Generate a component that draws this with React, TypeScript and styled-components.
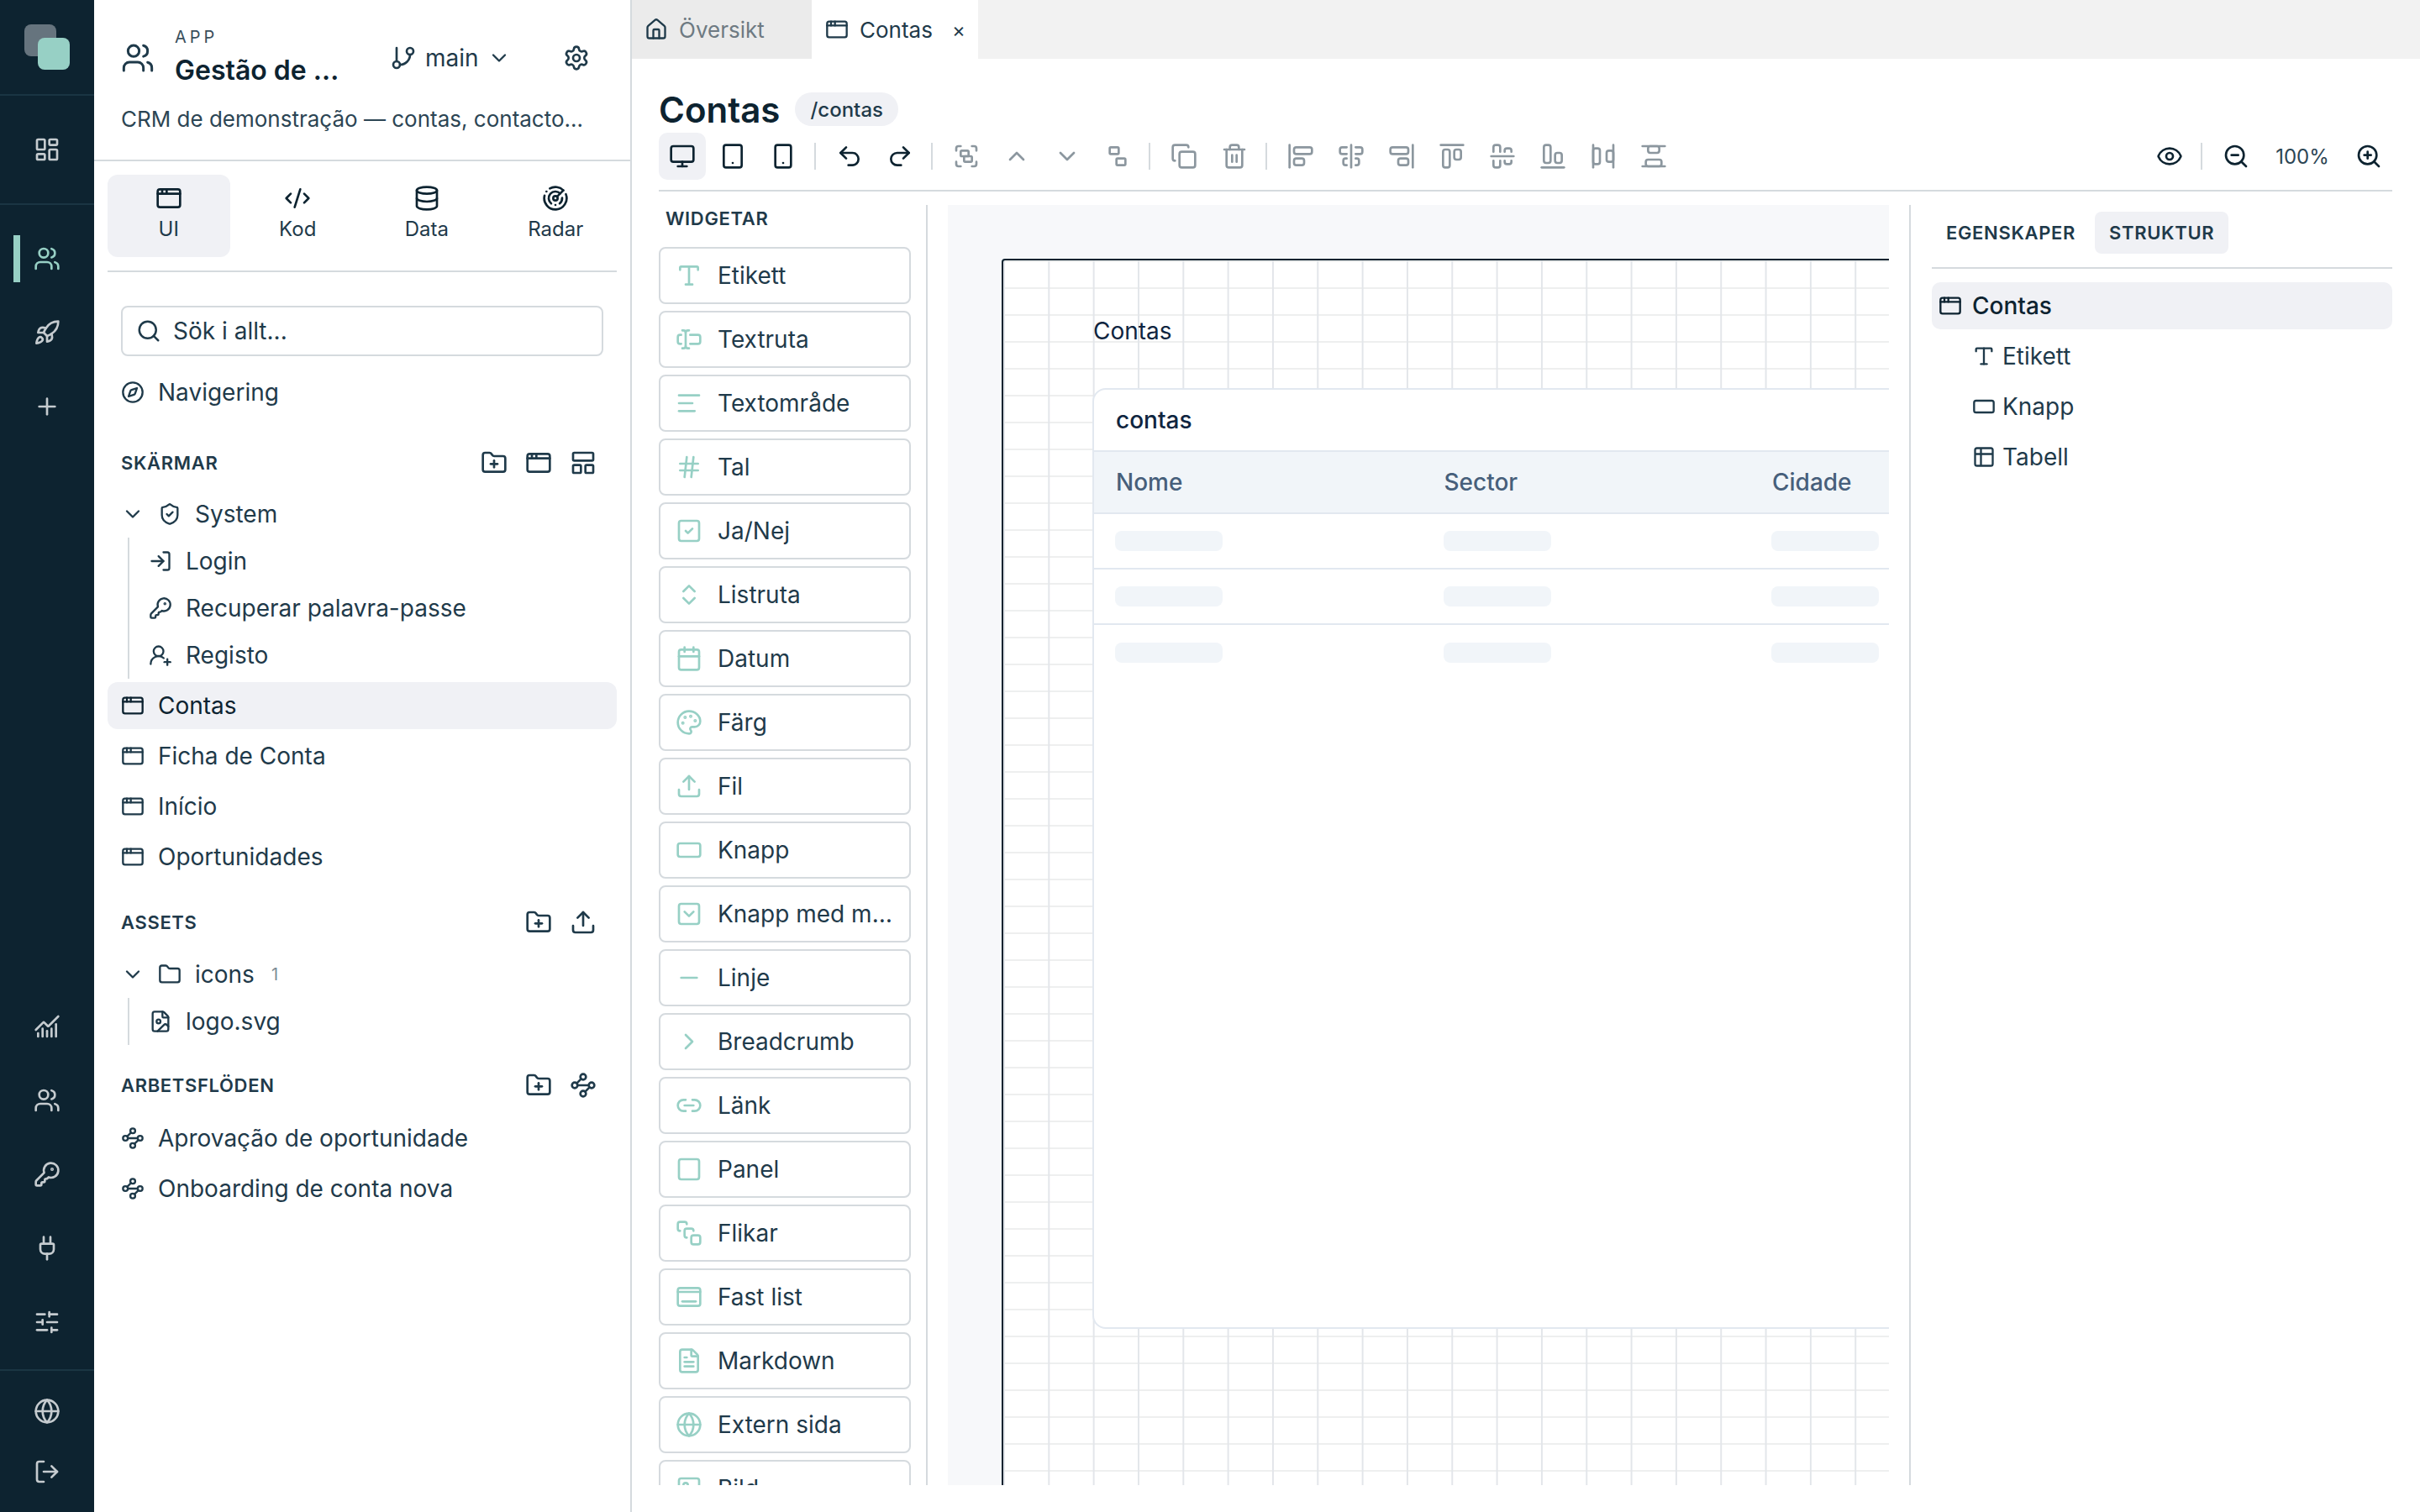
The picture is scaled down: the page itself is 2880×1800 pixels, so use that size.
import React from 'react'
import styled, { createGlobalStyle } from 'styled-components'
import {
  AlignCenterHorizontal, AlignCenterVertical, AlignEndHorizontal, AlignEndVertical,
  AlignHorizontalSpaceBetween, AlignLeft, AlignStartHorizontal, AlignStartVertical,
  AlignVerticalSpaceBetween, AppWindow, Calendar, ChartNoAxesCombined, ChevronDown,
  ChevronRight, ChevronUp, ChevronsUpDown, CodeXml, Compass, Copy, Database, Eye,
  FileImage, FileText, Folder, FolderPlus, GitBranch, Globe, Group, Hash, House, Image,
  KeyRound, LayoutDashboard, LayoutPanelTop, Link2, LogIn, LogOut, Minus, Monitor, Palette, Plug,
  Plus, Radar, Redo2, RectangleHorizontal, Rocket, Search, Settings, ShieldCheck,
  SlidersHorizontal, Smartphone, Square, SquareCheck, SquareChevronDown, SquareStack,
  Table2, Tablet, TextCursorInput, Trash2, Type, Undo2, Ungroup, Upload, UserRoundPlus,
  Users, Waypoints, ZoomIn, ZoomOut,
} from 'lucide-react'

const GlobalStyle = createGlobalStyle`
  html, body {
    margin: 0;
    height: 100%;
    background: #fff;
  }
  body {
    font-family: Inter, "Noto Sans", sans-serif;
    color: #1f3a4a;
  }
  * {
    box-sizing: border-box;
  }
`

// no lucide icon for this one
const FixedListIcon = ({ size = 32 }: { size?: number }) => (
  <svg width={size} height={size} viewBox="0 0 24 24" fill="none" stroke="currentColor" strokeWidth="2" strokeLinecap="round" strokeLinejoin="round">
    <rect x="2" y="4" width="20" height="16" rx="2" />
    <path d="M2 7.5h20" />
    <path d="M6 16h12" />
  </svg>
)

const widgets = [
  { label: 'Etikett', Icon: Type },
  { label: 'Textruta', Icon: TextCursorInput },
  { label: 'Textområde', Icon: AlignLeft },
  { label: 'Tal', Icon: Hash },
  { label: 'Ja/Nej', Icon: SquareCheck },
  { label: 'Listruta', Icon: ChevronsUpDown },
  { label: 'Datum', Icon: Calendar },
  { label: 'Färg', Icon: Palette },
  { label: 'Fil', Icon: Upload },
  { label: 'Knapp', Icon: RectangleHorizontal },
  { label: 'Knapp med meny', Icon: SquareChevronDown },
  { label: 'Linje', Icon: Minus },
  { label: 'Breadcrumb', Icon: ChevronRight },
  { label: 'Länk', Icon: Link2 },
  { label: 'Panel', Icon: Square },
  { label: 'Flikar', Icon: SquareStack },
  { label: 'Fast list', Icon: FixedListIcon },
  { label: 'Markdown', Icon: FileText },
  { label: 'Extern sida', Icon: Globe },
  { label: 'Bild', Icon: Image },
]

const App = () => {
  return (
    <Page>
      <GlobalStyle />
      <Rail>
        <LogoBlock>
          <Logo>
            <LogoBack />
            <LogoFront />
          </Logo>
        </LogoBlock>
        <RailGroup>
          <RailButton><LayoutDashboard size={32} /></RailButton>
        </RailGroup>
        <RailGroup grow>
          <RailButton active><Users size={32} /></RailButton>
          <RailButton><Rocket size={32} /></RailButton>
          <RailButton><Plus size={32} /></RailButton>
        </RailGroup>
        <RailGroup pad={28}>
          <RailButton><ChartNoAxesCombined size={32} /></RailButton>
          <RailButton><Users size={32} /></RailButton>
          <RailButton><KeyRound size={32} /></RailButton>
          <RailButton><Plug size={32} /></RailButton>
          <RailButton><SlidersHorizontal size={32} /></RailButton>
        </RailGroup>
        <RailGroup pad={20} gap={16} last>
          <RailButton><Globe size={32} /></RailButton>
          <RailButton><LogOut size={32} /></RailButton>
        </RailGroup>
      </Rail>

      <Sidebar>
        <AppHeader>
          <AppTop>
            <Users size={40} strokeWidth={1.8} />
            <AppName>
              <AppKicker>APP</AppKicker>
              <AppTitle>Gestão de Contas</AppTitle>
            </AppName>
            <BranchButton>
              <GitBranch size={32} />
              main
              <ChevronDown size={28} />
            </BranchButton>
            <SettingsButton><Settings size={32} /></SettingsButton>
          </AppTop>
          <AppDesc>CRM de demonstração — contas, contactos e oportunidades</AppDesc>
        </AppHeader>

        <ModeTabs>
          <ModeTab active><AppWindow size={32} /><span>UI</span></ModeTab>
          <ModeTab><CodeXml size={32} /><span>Kod</span></ModeTab>
          <ModeTab><Database size={32} /><span>Data</span></ModeTab>
          <ModeTab><Radar size={32} /><span>Radar</span></ModeTab>
        </ModeTabs>

        <SearchBox>
          <Search size={30} />
          <span>Sök i allt...</span>
        </SearchBox>

        <TreeList>
          <TreeRow><Compass size={28} />Navigering</TreeRow>
        </TreeList>

        <SectionHead top={36}>
          <SectionTitle>SKÄRMAR</SectionTitle>
          <SectionActions>
            <FolderPlus size={32} />
            <AppWindow size={32} />
            <LayoutPanelTop size={32} />
          </SectionActions>
        </SectionHead>

        <TreeList top={13}>
          <TreeRow><ChevronDown size={28} /><ShieldCheck size={28} />System</TreeRow>
          <TreeChildren>
            <TreeRow plain><LogIn size={28} />Login</TreeRow>
            <TreeRow plain><KeyRound size={28} />Recuperar palavra-passe</TreeRow>
            <TreeRow plain><UserRoundPlus size={28} />Registo</TreeRow>
          </TreeChildren>
          <TreeStack>
            <TreeRow active><AppWindow size={28} />Contas</TreeRow>
            <TreeRow><AppWindow size={28} />Ficha de Conta</TreeRow>
            <TreeRow><AppWindow size={28} />Início</TreeRow>
            <TreeRow><AppWindow size={28} />Oportunidades</TreeRow>
          </TreeStack>
        </TreeList>

        <SectionHead top={30}>
          <SectionTitle>ASSETS</SectionTitle>
          <SectionActions>
            <FolderPlus size={32} />
            <Upload size={32} />
          </SectionActions>
        </SectionHead>

        <TreeList top={14}>
          <TreeRow><ChevronDown size={28} /><Folder size={28} />icons<Count>1</Count></TreeRow>
          <TreeChildren>
            <TreeRow plain><FileImage size={28} />logo.svg</TreeRow>
          </TreeChildren>
        </TreeList>

        <SectionHead top={28}>
          <SectionTitle>ARBETSFLÖDEN</SectionTitle>
          <SectionActions>
            <FolderPlus size={32} />
            <Waypoints size={32} />
          </SectionActions>
        </SectionHead>

        <TreeList top={15}>
          <TreeStack>
            <TreeRow><Waypoints size={28} />Aprovação de oportunidade</TreeRow>
            <TreeRow><Waypoints size={28} />Onboarding de conta nova</TreeRow>
          </TreeStack>
        </TreeList>
      </Sidebar>

      <Main>
        <TabBar>
          <DocTab><House size={28} />Översikt</DocTab>
          <DocTab active><AppWindow size={28} />Contas<TabClose>×</TabClose></DocTab>
        </TabBar>

        <Workspace>
          <TitleRow>
            <ScreenTitle>Contas</ScreenTitle>
            <RoutePill>/contas</RoutePill>
          </TitleRow>

          <Toolbar>
            <ToolButton active><Monitor size={32} /></ToolButton>
            <ToolButton><Tablet size={32} /></ToolButton>
            <ToolButton><Smartphone size={32} /></ToolButton>
            <ToolDivider />
            <ToolButton><Undo2 size={32} /></ToolButton>
            <ToolButton><Redo2 size={32} /></ToolButton>
            <ToolDivider />
            <ToolButton off><Group size={32} /></ToolButton>
            <ToolButton off><ChevronUp size={32} /></ToolButton>
            <ToolButton off><ChevronDown size={32} /></ToolButton>
            <ToolButton off><Ungroup size={32} /></ToolButton>
            <ToolDivider />
            <ToolButton off><Copy size={32} /></ToolButton>
            <ToolButton off><Trash2 size={32} /></ToolButton>
            <ToolDivider />
            <ToolButton off><AlignStartVertical size={32} /></ToolButton>
            <ToolButton off><AlignCenterVertical size={32} /></ToolButton>
            <ToolButton off><AlignEndVertical size={32} /></ToolButton>
            <ToolButton off><AlignStartHorizontal size={32} /></ToolButton>
            <ToolButton off><AlignCenterHorizontal size={32} /></ToolButton>
            <ToolButton off><AlignEndHorizontal size={32} /></ToolButton>
            <ToolButton off><AlignHorizontalSpaceBetween size={32} /></ToolButton>
            <ToolButton off><AlignVerticalSpaceBetween size={32} /></ToolButton>
            <ToolSpacer />
            <ToolButton><Eye size={32} /></ToolButton>
            <ToolDivider />
            <ToolButton><ZoomOut size={32} /></ToolButton>
            <ZoomValue>100%</ZoomValue>
            <ToolButton><ZoomIn size={32} /></ToolButton>
          </Toolbar>

          <Body>
            <WidgetPanel>
              <WidgetHeading>WIDGETAR</WidgetHeading>
              <WidgetList>
                {widgets.map(({ label, Icon }) => (
                  <WidgetItem key={label}>
                    <WidgetIcon><Icon size={32} /></WidgetIcon>
                    <WidgetLabel>{label}</WidgetLabel>
                  </WidgetItem>
                ))}
              </WidgetList>
            </WidgetPanel>

            <Canvas>
              <Frame>
                <CanvasLabel>Contas</CanvasLabel>
                <TableCard>
                  <TableTitle>contas</TableTitle>
                  <TableHeader>
                    <HeaderCell>Nome</HeaderCell>
                    <HeaderCell>Sector</HeaderCell>
                    <HeaderCell>Cidade</HeaderCell>
                  </TableHeader>
                  {[0, 1, 2].map((row) => (
                    <TableRow key={row} last={row === 2}>
                      <SkeletonCell><Skeleton /></SkeletonCell>
                      <SkeletonCell><Skeleton /></SkeletonCell>
                      <SkeletonCell><Skeleton /></SkeletonCell>
                    </TableRow>
                  ))}
                </TableCard>
              </Frame>
            </Canvas>

            <Inspector>
              <InspectorTabs>
                <InspectorTab>EGENSKAPER</InspectorTab>
                <InspectorTab active>STRUKTUR</InspectorTab>
              </InspectorTabs>
              <StructureList>
                <StructureRoot><AppWindow size={28} />Contas</StructureRoot>
                <StructureRow><Type size={28} />Etikett</StructureRow>
                <StructureRow><RectangleHorizontal size={28} />Knapp</StructureRow>
                <StructureRow><Table2 size={28} />Tabell</StructureRow>
              </StructureList>
            </Inspector>
          </Body>
        </Workspace>
      </Main>
    </Page>
  )
}

export default App

const Page = styled.div`
  display: flex;
  width: 100%;
  height: 100vh;
  overflow: hidden;
  background: #fff;
`

/* left rail */
const Rail = styled.nav`
  width: 112px;
  flex-shrink: 0;
  display: flex;
  flex-direction: column;
  background: #0d2330;
`
const LogoBlock = styled.div`
  height: 114px;
  display: flex;
  padding: 29px 0 0 29px;
  border-bottom: 2px solid #1a3543;
`
const Logo = styled.div`
  position: relative;
  width: 54px;
  height: 54px;
`
const LogoBack = styled.div`
  width: 38px;
  height: 38px;
  border-radius: 8px;
  background: #66747e;
`
const LogoFront = styled.div`
  position: absolute;
  left: 16px;
  top: 16px;
  width: 38px;
  height: 38px;
  border-radius: 8px;
  background: #97d0c5;
`
const RailGroup = styled.div<{ grow?: boolean; pad?: number; gap?: number; last?: boolean }>`
  display: flex;
  flex-direction: column;
  flex-grow: ${({ grow }) => (grow ? 1 : 0)};
  gap: ${({ gap }) => gap ?? 32}px;
  padding: ${({ pad }) => pad ?? 36}px 0;
  border-bottom: ${({ grow, last }) => (grow || last ? 'none' : '2px solid #1a3543')};
`
const RailButton = styled.div<{ active?: boolean }>`
  position: relative;
  height: 56px;
  display: flex;
  align-items: center;
  justify-content: center;
  color: ${({ active }) => (active ? '#97d0c5' : '#c5cbcf')};
  &::before {
    content: '';
    display: ${({ active }) => (active ? 'block' : 'none')};
    position: absolute;
    left: 16px;
    top: 0;
    bottom: 0;
    width: 8px;
    background: #97d0c5;
  }
`

/* app sidebar */
const Sidebar = styled.aside`
  width: 640px;
  flex-shrink: 0;
  display: flex;
  flex-direction: column;
  background: #fff;
  border-right: 2px solid #d5dade;
`
const AppHeader = styled.div`
  height: 192px;
  padding: 32px 48px 0 32px;
  border-bottom: 2px solid #d5dade;
  color: #1f3a4a;
`
const AppTop = styled.div`
  display: flex;
  align-items: center;
  color: #1f3a4a;
`
const AppName = styled.div`
  width: 200px;
  margin-left: 24px;
  display: flex;
  flex-direction: column;
  gap: 6px;
`
const AppKicker = styled.div`
  font-size: 20px;
  line-height: 24px;
  letter-spacing: 0.2em;
  color: #3a4f5c;
`
const AppTitle = styled.div`
  font-size: 32px;
  line-height: 44px;
  font-weight: 600;
  color: #0d2330;
  white-space: nowrap;
  overflow: hidden;
  text-overflow: ellipsis;
`
const BranchButton = styled.div`
  margin-left: 56px;
  display: flex;
  align-items: center;
  gap: 10px;
  font-size: 28px;
  color: #1f3a4a;
`
const SettingsButton = styled.div`
  margin-left: auto;
  display: flex;
`
const AppDesc = styled.div`
  margin-top: 18px;
  font-size: 26px;
  line-height: 36px;
  color: #2c4554;
  white-space: nowrap;
  overflow: hidden;
  text-overflow: ellipsis;
`
const ModeTabs = styled.div`
  margin: 16px 16px 0;
  padding-bottom: 16px;
  display: grid;
  grid-template-columns: repeat(4, 1fr);
  gap: 8px;
  border-bottom: 2px solid #d5dade;
`
const ModeTab = styled.div<{ active?: boolean }>`
  height: 98px;
  padding-top: 12px;
  display: flex;
  flex-direction: column;
  align-items: center;
  gap: 5px;
  border-radius: 12px;
  background: ${({ active }) => (active ? '#f0f1f5' : 'transparent')};
  color: #0d2330;
  span {
    font-size: 24px;
    line-height: 32px;
    color: #1f3a4a;
  }
`
const SearchBox = styled.div`
  margin: 40px 32px 0;
  height: 60px;
  display: flex;
  align-items: center;
  gap: 14px;
  padding: 0 16px;
  border: 2px solid #d5dade;
  border-radius: 8px;
  font-size: 28px;
  color: #1f3a4a;
`
const TreeList = styled.div<{ top?: number }>`
  margin: ${({ top }) => top ?? 15}px 16px 0;
`
const TreeStack = styled.div`
  display: flex;
  flex-direction: column;
  gap: 4px;
  padding-top: 4px;
  &:first-child {
    padding-top: 0;
  }
`
const TreeRow = styled.div<{ active?: boolean; plain?: boolean }>`
  height: 56px;
  display: flex;
  align-items: center;
  gap: 16px;
  padding-left: ${({ plain }) => (plain ? 0 : 16)}px;
  border-radius: 12px;
  background: ${({ active }) => (active ? '#f0f1f5' : 'transparent')};
  font-size: 28px;
  color: ${({ active }) => (active ? '#0d2330' : '#1f3a4a')};
  white-space: nowrap;
`
const TreeChildren = styled.div`
  margin-left: 24px;
  padding-left: 23px;
  border-left: 2px solid #d5dade;
`
const Count = styled.span`
  margin-left: 4px;
  font-size: 20px;
  color: #7d8b95;
`
const SectionHead = styled.div<{ top: number }>`
  margin-top: ${({ top }) => top}px;
  height: 40px;
  padding: 0 40px 0 32px;
  display: flex;
  align-items: center;
  justify-content: space-between;
`
const SectionTitle = styled.div`
  font-size: 22px;
  font-weight: 600;
  letter-spacing: 0.03em;
  color: #1f3a4a;
`
const SectionActions = styled.div`
  display: flex;
  gap: 21px;
  color: #1f3a4a;
`

/* main column */
const Main = styled.main`
  flex: 1;
  min-width: 0;
  display: flex;
  flex-direction: column;
`
const TabBar = styled.div`
  height: 70px;
  flex-shrink: 0;
  display: flex;
  background: #f2f2f2;
`
const DocTab = styled.div<{ active?: boolean }>`
  width: ${({ active }) => (active ? 198 : 214)}px;
  display: flex;
  align-items: center;
  gap: 13px;
  padding-left: ${({ active }) => (active ? 16 : 15)}px;
  background: ${({ active }) => (active ? '#fff' : '#ebebeb')};
  font-size: 26px;
  color: ${({ active }) => (active ? '#1f3a4a' : '#6e7a82')};
  svg {
    color: #1f3a4a;
  }
`
const TabClose = styled.span`
  margin-left: 10px;
  font-size: 24px;
  color: #1f3a4a;
`
const Workspace = styled.div`
  flex: 1;
  min-height: 0;
  display: flex;
  flex-direction: column;
  padding: 40px 33px 32px 32px;
`
const TitleRow = styled.div`
  height: 40px;
  display: flex;
  align-items: center;
  gap: 18px;
`
const ScreenTitle = styled.h1`
  margin: 0;
  font-size: 42px;
  font-weight: 600;
  color: #0d2330;
`
const RoutePill = styled.div`
  height: 40px;
  padding: 0 18px;
  display: flex;
  align-items: center;
  border-radius: 20px;
  background: #f0f1f5;
  font-size: 24px;
  font-weight: 500;
  color: #1f3a4a;
`
const Toolbar = styled.div`
  margin-top: 8px;
  padding-bottom: 12px;
  display: flex;
  align-items: center;
  gap: 4px;
  border-bottom: 2px solid #d5dade;
`
const ToolButton = styled.div<{ active?: boolean; off?: boolean }>`
  width: 56px;
  height: 56px;
  display: flex;
  align-items: center;
  justify-content: center;
  border-radius: 10px;
  background: ${({ active }) => (active ? '#f0f1f5' : 'transparent')};
  color: ${({ off }) => (off ? '#8c979f' : '#0d2330')};
`
const ToolDivider = styled.div`
  width: 2px;
  height: 32px;
  margin: 0 8px 0 5px;
  background: #d5dade;
`
const ToolSpacer = styled.div`
  flex: 1;
`
const ZoomValue = styled.div`
  width: 94px;
  text-align: center;
  font-size: 24px;
  color: #2c4554;
`
const Body = styled.div`
  flex: 1;
  min-height: 0;
  margin-top: 16px;
  display: flex;
`
const WidgetPanel = styled.div`
  width: 320px;
  flex-shrink: 0;
  display: flex;
  flex-direction: column;
  padding-right: 18px;
  border-right: 2px solid #d5dade;
`
const WidgetHeading = styled.div`
  height: 32px;
  padding-left: 8px;
  margin-bottom: 18px;
  font-size: 22px;
  line-height: 32px;
  font-weight: 600;
  letter-spacing: 0.03em;
  color: #1f3a4a;
`
const WidgetList = styled.div`
  flex: 1;
  min-height: 0;
  overflow: hidden;
  display: flex;
  flex-direction: column;
  gap: 8px;
`
const WidgetItem = styled.div`
  height: 68px;
  flex-shrink: 0;
  display: flex;
  align-items: center;
  gap: 18px;
  padding: 0 20px 0 18px;
  border: 2px solid #d5dade;
  border-radius: 8px;
  background: #fff;
`
const WidgetIcon = styled.div`
  display: flex;
  flex-shrink: 0;
  color: #97d0c5;
`
const WidgetLabel = styled.div`
  min-width: 0;
  font-size: 28px;
  color: #1f3a4a;
  white-space: nowrap;
  overflow: hidden;
  text-overflow: ellipsis;
`

/* canvas */
const Canvas = styled.div`
  width: 1120px;
  flex-shrink: 0;
  margin-left: 24px;
  padding: 64px 0 0 64px;
  overflow: hidden;
  background: #f7f8fa;
`
const Frame = styled.div`
  position: relative;
  width: 2560px;
  height: 1800px;
  border: 2px solid #0d2330;
  border-radius: 4px;
  background-color: #fff;
  background-image:
    linear-gradient(to right, #e3e6ea 2px, transparent 2px),
    linear-gradient(to bottom, #eeefef 2px, transparent 2px);
  background-size: 53.33px 32px;
`
const CanvasLabel = styled.div`
  position: absolute;
  left: 107px;
  top: 66px;
  font-size: 28px;
  line-height: 36px;
  color: #0f2540;
`
const TableCard = styled.div`
  position: absolute;
  left: 106px;
  top: 152px;
  width: 1700px;
  height: 1120px;
  border: 2px solid #e2e8f0;
  border-radius: 16px;
  background: #fff;
`
const TableTitle = styled.div`
  height: 72px;
  padding-left: 26px;
  display: flex;
  align-items: center;
  font-size: 28px;
  font-weight: 500;
  color: #0f2540;
`
const TableHeader = styled.div`
  height: 76px;
  display: grid;
  grid-template-columns: repeat(4, 390.5px);
  align-items: center;
  background: #f1f5f9;
  border-top: 2px solid #e2e8f0;
  border-bottom: 2px solid #e2e8f0;
`
const HeaderCell = styled.div`
  padding-left: 26px;
  font-size: 28px;
  font-weight: 500;
  color: #475f7b;
`
const TableRow = styled.div<{ last?: boolean }>`
  height: 66px;
  display: grid;
  grid-template-columns: repeat(4, 390.5px);
  align-items: center;
  border-bottom: ${({ last }) => (last ? 'none' : '2px solid #e2e8f0')};
`
const SkeletonCell = styled.div`
  padding-left: 25px;
`
const Skeleton = styled.div`
  width: 128px;
  height: 24px;
  border-radius: 8px;
  background: #f1f5f9;
`

/* right panel */
const Inspector = styled.div`
  flex: 1;
  min-width: 0;
  margin-left: 24px;
  padding-left: 25px;
  border-left: 2px solid #d5dade;
`
const InspectorTabs = styled.div`
  height: 76px;
  padding-top: 8px;
  display: flex;
  gap: 6px;
  border-bottom: 2px solid #d5dade;
`
const InspectorTab = styled.div<{ active?: boolean }>`
  height: 50px;
  padding: 0 17px;
  display: flex;
  align-items: center;
  border-radius: 8px;
  background: ${({ active }) => (active ? '#f0f1f5' : 'transparent')};
  font-size: 22px;
  font-weight: 600;
  letter-spacing: 0.03em;
  color: #1f3a4a;
`
const StructureList = styled.div`
  margin-top: 16px;
  display: flex;
  flex-direction: column;
  gap: 4px;
`
const StructureRoot = styled.div`
  height: 56px;
  display: flex;
  align-items: center;
  gap: 12px;
  padding-left: 8px;
  border-radius: 10px;
  background: #f0f1f5;
  font-size: 28px;
  font-weight: 500;
  color: #0d2330;
`
const StructureRow = styled.div`
  height: 56px;
  display: flex;
  align-items: center;
  gap: 8px;
  padding-left: 48px;
  font-size: 28px;
  color: #1f3a4a;
`
